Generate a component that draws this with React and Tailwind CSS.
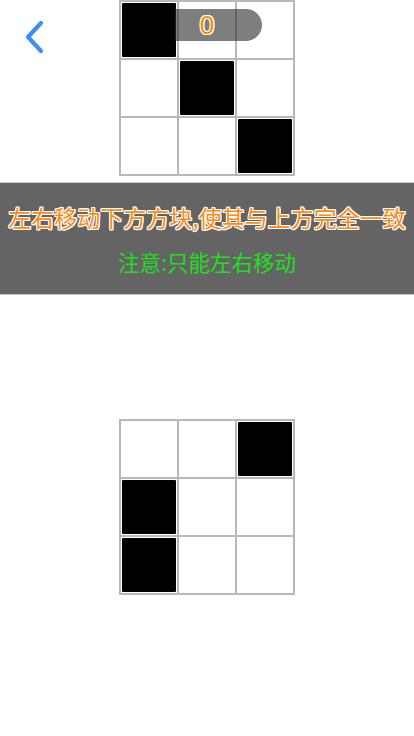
import React from "react";

const top = [1, 0, 0, 0, 1, 0, 0, 0, 1];
const bottom = [0, 0, 1, 1, 0, 0, 1, 0, 0];

function Grid({ cells }) {
  return (
    <div className="grid grid-cols-3 w-[176px] border border-[#b8b8b8]">
      {cells.map((c, i) => (
        <div key={i} className="relative z-10 w-[58px] h-[58px] border border-[#b8b8b8] p-px">
          {c ? <div className="w-full h-full bg-black rounded-[1px]" /> : null}
        </div>
      ))}
    </div>
  );
}

const outline = {
  textShadow:
    "1px 0 0 #fff, -1px 0 0 #fff, 0 1px 0 #fff, 0 -1px 0 #fff, 1px 1px 0 #fff, -1px -1px 0 #fff, 1px -1px 0 #fff, -1px 1px 0 #fff",
};

export default function App() {
  return (
    <div className="w-[414px] h-[736px] bg-white overflow-hidden font-['Noto_Sans_CJK_SC','Noto_Sans',sans-serif]">
      <div className="relative h-[182px]">
        <button className="absolute left-[20px] top-[20px] w-[28px] h-[34px] flex items-center justify-center">
          <svg width="24" height="34" viewBox="0 0 24 34" fill="none">
            <path d="M19 3 L6 17 L19 31" stroke="#3b8ff5" strokeWidth="4.2" strokeLinecap="round" strokeLinejoin="round" />
          </svg>
        </button>
        <div className="relative w-[176px] mx-auto">
          <Grid cells={top} />
          <div className="absolute z-20 left-[56px] top-[9px] w-[87px] h-[32px] rounded-r-full bg-[rgba(40,40,40,0.6)]" />
          <div
            className="absolute z-30 left-[33px] top-[9px] w-[110px] h-[32px] flex items-center justify-center text-[26px] leading-none text-[#ff8a00] font-['Liberation_Sans',sans-serif]"
            style={outline}
          >
            0
          </div>
        </div>
      </div>
      <div className="h-[113px] bg-[#646464] border-t border-b border-[#c8c8c8] flex flex-col items-center">
        <div className="mt-[16px] text-[23px] leading-[36px] text-[#ff8a14] whitespace-nowrap" style={outline}>
          左右移动下方方块,使其与上方完全一致
        </div>
        <div className="mt-[12px] text-[21.5px] leading-[30px] text-[#1ee01e] whitespace-nowrap">
          注意:只能左右移动
        </div>
      </div>
      <div className="flex justify-center pt-[124px]">
        <Grid cells={bottom} />
      </div>
    </div>
  );
}
